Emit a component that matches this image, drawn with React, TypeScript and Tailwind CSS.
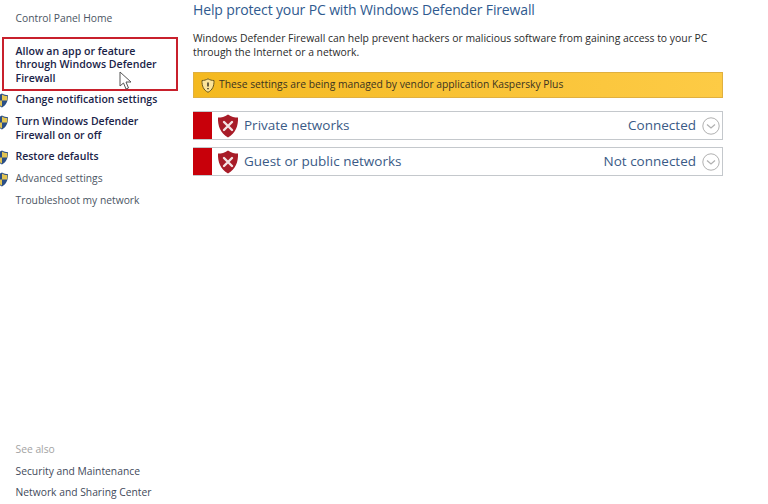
import React from 'react'

function UacShield() {
  return (
    <svg viewBox="0 0 14 15" className="absolute left-[-5px] top-0 w-[14px] h-[15px]">
      <path d="M7 0.5 C9 1.8 11 2.2 13 2.2 C13.2 8 11.5 12 7 14.5 C2.5 12 0.8 8 1 2.2 C3 2.2 5 1.8 7 0.5Z" fill="#2b4f86" />
      <path d="M7 1.5 L7 7.5 L12.2 7.5 C12.4 5.8 12.4 4.4 12.3 3 C10.4 3 8.7 2.5 7 1.5Z" fill="#e2c452" />
      <path d="M7 7.5 L7 13.5 C4.2 12 2.6 10 1.9 7.5Z" fill="#e2c452" />
    </svg>
  )
}

function XShield() {
  return (
    <svg viewBox="0 0 22 24" className="w-[22px] h-[24px] shrink-0">
      <path d="M11 0.5 C14.5 2.8 17.5 3.6 21 3.6 C21.4 12 18.5 19.5 11 23.5 C3.5 19.5 0.6 12 1 3.6 C4.5 3.6 7.5 2.8 11 0.5Z" fill="#a81c28" />
      <path d="M7 8 L15 16 M15 8 L7 16" stroke="#f4e4e4" strokeWidth="2.4" strokeLinecap="round" />
    </svg>
  )
}

function Chevron() {
  return (
    <svg viewBox="0 0 18 18" className="w-[18px] h-[18px] shrink-0">
      <circle cx="9" cy="9" r="8.2" fill="none" stroke="#b0b0b0" strokeWidth="1" />
      <path d="M5 7.5 L9 11 L13 7.5" fill="none" stroke="#b0b0b0" strokeWidth="1.2" />
    </svg>
  )
}

function NetworkRow({ name, status }: { name: string; status: string }) {
  return (
    <div className="flex items-stretch h-[29px] border border-[#c4c8cc] border-l-0">
      <div className="w-[19px] bg-[#c8000a]" />
      <div className="flex flex-1 items-center pl-[5px] pr-[2px]">
        <XShield />
        <span className="ml-[5px] text-[13.5px] text-[#3a5a86]">{name}</span>
        <span className="ml-auto mr-[6px] text-[13.5px] text-[#3a5a86]">{status}</span>
        <Chevron />
      </div>
    </div>
  )
}

export default function App() {
  return (
    <div className="flex h-[504px] w-[768px] overflow-hidden bg-white font-['Open_Sans',sans-serif]">
      {/* Sidebar */}
      <div className="relative flex w-[193px] shrink-0 flex-col justify-between pb-[5px] pt-[12px] text-[10.3px] leading-[13.5px]">
        <div className="flex flex-col">
          <div className="pl-[15.5px] text-[#4b5563]">Control Panel Home</div>

          <div className="relative ml-[2px] mr-[15px] mt-[11px] h-[54px] border-2 border-[#c8202c] pl-[11.5px] pt-[6px] text-[10.6px] font-semibold text-[#1a2348]">
            Allow an app or feature through Windows Defender Firewall
            {/* Cursor */}
            <svg viewBox="0 0 14 20" className="absolute left-[115px] top-[32px] w-[14px] h-[20px]">
              <path d="M1 1 L1 15 L4.5 12 L7 18 L9.5 17 L7 11 L12 11 Z" fill="#fff" stroke="#555" strokeWidth="1" />
            </svg>
          </div>

          <div className="relative mt-[2px] pl-[15.5px] text-[10.5px] font-semibold text-[#1a2348]">
            <UacShield />
            Change notification settings
          </div>
          <div className="relative mt-[9px] pl-[15.5px] pr-[25px] text-[10.5px] font-semibold text-[#1a2348]">
            <UacShield />
            Turn Windows Defender Firewall on or off
          </div>
          <div className="relative mt-[8px] pl-[15.5px] text-[10.5px] font-semibold text-[#1a2348]">
            <UacShield />
            Restore defaults
          </div>
          <div className="relative mt-[8.5px] pl-[15.5px] text-[#4b5563]">
            <UacShield />
            Advanced settings
          </div>
          <div className="mt-[8.5px] pl-[15.5px] text-[#4b5563]">Troubleshoot my network</div>
        </div>

        <div className="flex flex-col pl-[15.5px]">
          <div className="text-[#a3a3a3]">See also</div>
          <div className="mt-[8px] text-[#3f4a5a]">Security and Maintenance</div>
          <div className="mt-[7.5px] text-[#3f4a5a]">Network and Sharing Center</div>
        </div>
      </div>

      {/* Main */}
      <div className="flex w-[530px] flex-col">
        <h1 className="text-[14px] leading-[20px] tracking-[-0.14px] text-[#2f5a8f]">Help protect your PC with Windows Defender Firewall</h1>
        <p className="mt-[11px] text-[10.4px] leading-[14px] text-[#2b2b2b]">
          Windows Defender Firewall can help prevent hackers or malicious software from gaining access to your PC
          <br />
          through the Internet or a network.
        </p>
        <div className="mt-[13px] flex h-[26px] items-center gap-[4px] border border-[#e0b040] bg-gradient-to-r from-[#f4b91f] to-[#fdcb45] pl-[7px] text-[10.3px] text-[#3a3320]">
          <svg viewBox="0 0 14 15" className="w-[14px] h-[15px] shrink-0">
            <path d="M7 0.8 C9 2 11 2.5 13 2.5 C13.2 8 11.5 12 7 14.3 C2.5 12 0.8 8 1 2.5 C3 2.5 5 2 7 0.8Z" fill="#fbe39a" stroke="#6b5a20" strokeWidth="1" />
            <path d="M7 4.5 L7 8.5 M7 10 L7 11.3" stroke="#3a3320" strokeWidth="1.5" />
          </svg>
          These settings are being managed by vendor application Kaspersky Plus
        </div>
        <div className="mt-[13px] flex flex-col gap-[7px]">
          <NetworkRow name="Private networks" status="Connected" />
          <NetworkRow name="Guest or public networks" status="Not connected" />
        </div>
      </div>
    </div>
  )
}
